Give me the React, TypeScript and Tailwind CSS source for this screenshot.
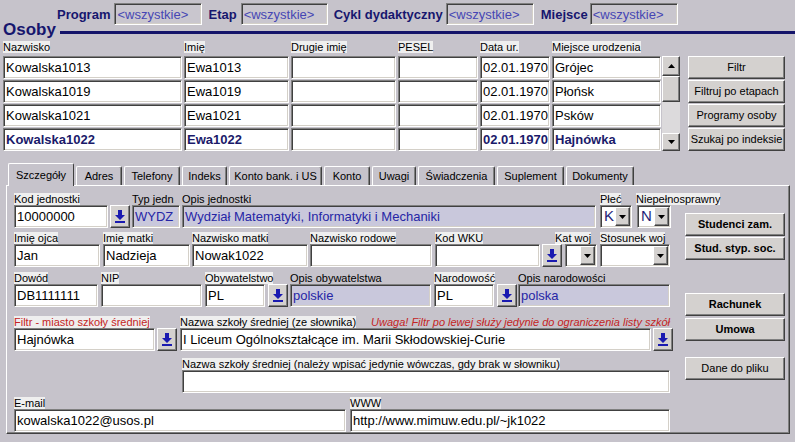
import React from "react";

const SUNKEN =
  "border border-t-[#808080] border-l-[#808080] border-b-white border-r-white shadow-[inset_1px_1px_0_#404040,inset_-1px_-1px_0_#d4d0c8]";
const RAISED =
  "border border-t-white border-l-white border-b-[#404040] border-r-[#404040] shadow-[inset_-1px_-1px_0_#808080]";

function Lbl({
  children,
  plain,
  red,
  className = "",
}: {
  children: React.ReactNode;
  plain?: boolean;
  red?: boolean;
  className?: string;
}) {
  return (
    <div className={"h-[12px] leading-[12px] text-[11px] whitespace-nowrap " + className}>
      <span className={(plain ? "" : "bg-[#efefef] ") + (red ? "text-[#c42424]" : "text-black")}>{children}</span>
    </div>
  );
}

function Field({
  children,
  className = "",
  ro,
  bold,
}: {
  children?: React.ReactNode;
  className?: string;
  ro?: boolean;
  bold?: boolean;
}) {
  return (
    <div
      className={
        "h-[23px] flex items-center px-[2px] text-[13px] whitespace-nowrap overflow-hidden shrink-0 " +
        (ro ? "bg-[#c9c8dc] text-[#2626a6] " : "bg-white ") +
        (bold ? "font-bold text-[#1a1a6a] " : ro ? "" : "text-black ") +
        SUNKEN +
        " " +
        className
      }
    >
      {children}
    </div>
  );
}

function ArrowBtn() {
  return (
    <div className={"w-[20px] h-[23px] shrink-0 bg-[#d4d1cf] flex items-center justify-center " + RAISED}>
      <svg width="10" height="13" viewBox="0 0 10 13">
        <path d="M3 0h4v5h3L5 10 0 5h3z" fill="#1a1ab0" />
        <rect x="0" y="11" width="10" height="2" fill="#1a1ab0" />
      </svg>
    </div>
  );
}

function Tri({ up }: { up?: boolean }) {
  return (
    <svg width="7" height="4" viewBox="0 0 7 4">
      <path d={up ? "M0 4h7L3.5 0z" : "M0 0h7L3.5 4z"} fill="black" />
    </svg>
  );
}

function Combo({ value, className = "" }: { value?: string; className?: string }) {
  return (
    <div className={"h-[23px] bg-white flex items-center shrink-0 p-[1px] " + SUNKEN + " " + className}>
      <span className="flex-1 pl-[2px] text-[15px] text-[#1e1e78]">{value}</span>
      <div className={"w-[15px] h-[19px] bg-[#d4d1cf] flex items-center justify-center " + RAISED}>
        <Tri />
      </div>
    </div>
  );
}

function Btn({ children, bold, className = "" }: { children: React.ReactNode; bold?: boolean; className?: string }) {
  return (
    <div
      className={
        "h-[23px] bg-[#d4d1cf] flex items-center justify-center text-[11px] text-black " +
        (bold ? "font-bold " : "") +
        RAISED +
        " " +
        className
      }
    >
      {children}
    </div>
  );
}

function HeadBox({ className = "" }: { className?: string }) {
  return (
    <div
      className={
        "h-[22px] mt-[3px] bg-[#c9c6ce] flex items-start pt-[1px] px-[2px] text-[13px] font-normal text-[#4646b4] " +
        SUNKEN +
        " " +
        className
      }
    >
      {"<wszystkie>"}
    </div>
  );
}

const rows = [
  { n: "Kowalska1013", i: "Ewa1013", m: "Grójec" },
  { n: "Kowalska1019", i: "Ewa1019", m: "Płońsk" },
  { n: "Kowalska1021", i: "Ewa1021", m: "Psków" },
  { n: "Kowalska1022", i: "Ewa1022", m: "Hajnówka", bold: true },
];

const tabs = [
  { t: "Szczegóły", w: "w-[66px]", active: true },
  { t: "Adres", w: "w-[46px]" },
  { t: "Telefony", w: "w-[56px]" },
  { t: "Indeks", w: "w-[45px]" },
  { t: "Konto bank. i US", w: "w-[93px]" },
  { t: "Konto", w: "w-[46px]" },
  { t: "Uwagi", w: "w-[44px]" },
  { t: "Świadczenia", w: "w-[77px]" },
  { t: "Suplement", w: "w-[67px]" },
  { t: "Dokumenty", w: "w-[68px]" },
];

export default function App() {
  return (
    <div
      className="w-[795px] h-[442px] bg-[#c6c3cb] overflow-hidden flex flex-col"
      style={{ fontFamily: '"Liberation Sans", Arial, Helvetica, sans-serif' }}
    >
      {/* header filter row */}
      <div className="h-[26px] flex items-start pl-[57px] text-[13px] font-bold text-[#16166e] shrink-0">
        <span className="mt-[5px]">Program</span>
        <HeadBox className="ml-[4px] w-[88px]" />
        <span className="mt-[5px] ml-[6px]">Etap</span>
        <HeadBox className="ml-[4px] w-[87px]" />
        <span className="mt-[5px] ml-[6px]">Cykl dydaktyczny</span>
        <HeadBox className="ml-[3px] w-[88px]" />
        <span className="mt-[5px] ml-[7px]">Miejsce</span>
        <HeadBox className="ml-[2px] w-[88px]" />
      </div>

      {/* Osoby */}
      <div className="-mt-[5px] h-[18px] flex items-start shrink-0">
        <span className="ml-[3px] text-[17px] leading-[18px] font-bold text-[#16166e]">Osoby</span>
        <div className="ml-[4px] mt-[10px] flex-1 h-[3px] bg-[#14146a]" />
      </div>

      {/* column labels */}
      <div className="mt-[2px] ml-[3px] flex gap-[2px] shrink-0">
        <Lbl className="w-[179px]">Nazwisko</Lbl>
        <Lbl className="w-[105px]">Imię</Lbl>
        <Lbl className="w-[105px]">Drugie imię</Lbl>
        <Lbl className="w-[80px]">PESEL</Lbl>
        <Lbl className="w-[70px]">Data ur.</Lbl>
        <Lbl className="w-[109px]">Miejsce urodzenia</Lbl>
      </div>

      {/* list + buttons */}
      <div className="mt-[3px] ml-[3px] flex shrink-0">
        <div className="flex flex-col gap-[1px]">
          {rows.map((r) => (
            <div key={r.n} className="flex gap-[2px]">
              <Field className="w-[179px]" bold={r.bold}>{r.n}</Field>
              <Field className="w-[105px]" bold={r.bold}>{r.i}</Field>
              <Field className="w-[105px]" />
              <Field className="w-[80px]" />
              <Field className="w-[70px] px-[1px]" bold={r.bold}>02.01.1970</Field>
              <Field className="w-[109px]" bold={r.bold}>{r.m}</Field>
            </div>
          ))}
        </div>
        <div className="ml-[1px] w-[18px] h-[95px] flex flex-col bg-[#dcdadc]">
          <div className={"h-[20px] bg-[#d4d1cf] flex items-center justify-center " + RAISED}>
            <Tri up />
          </div>
          <div className={"h-[26px] bg-[#d4d1cf] " + RAISED} />
          <div className="flex-1" />
          <div className={"h-[18px] bg-[#d4d1cf] flex items-center justify-center " + RAISED}>
            <Tri />
          </div>
        </div>
        <div className="ml-[8px] w-[97px] flex flex-col gap-[1px]">
          <Btn>Filtr</Btn>
          <Btn>Filtruj po etapach</Btn>
          <Btn>Programy osoby</Btn>
          <Btn>Szukaj po indeksie</Btn>
        </div>
      </div>

      {/* tabs */}
      <div className="mt-[12px] ml-[8px] h-[22px] flex items-end gap-[2px] shrink-0 relative z-10">
        {tabs.map((t) =>
          t.active ? (
            <div
              key={t.t}
              className={
                "h-[23px] -mb-[1px] bg-[#c6c3cb] border-t border-l border-r border-t-white border-l-white border-r-[#404040] rounded-t-[2px] flex items-center justify-center text-[11px] text-black " +
                t.w
              }
            >
              {t.t}
            </div>
          ) : (
            <div
              key={t.t}
              className={
                "h-[19px] bg-[#c6c3cb] border-t border-l border-r border-t-white border-l-white border-r-[#404040] shadow-[inset_-1px_0_0_#808080] rounded-t-[2px] flex items-center justify-center text-[11px] text-black " +
                t.w
              }
            >
              {t.t}
            </div>
          )
        )}
      </div>

      {/* panel */}
      <div className={"ml-[6px] w-[784px] h-[249px] flex shrink-0 " + RAISED}>
        <div className="w-[666px] pl-[7px] pt-[7px] flex flex-col">
          {/* row 1 */}
          <div className="flex">
            <div className="flex flex-col">
              <Lbl>Kod jednostki</Lbl>
              <div className="flex gap-[2px]">
                <Field className="w-[94px]">10000000</Field>
                <ArrowBtn />
              </div>
            </div>
            <div className="ml-[2px] flex flex-col">
              <Lbl plain>Typ jedn</Lbl>
              <Field ro className="w-[48px]">WYDZ</Field>
            </div>
            <div className="ml-[2px] flex flex-col">
              <Lbl plain>Opis jednostki</Lbl>
              <Field ro className="w-[414px]">Wydział Matematyki, Informatyki i Mechaniki</Field>
            </div>
            <div className="ml-[4px] flex flex-col w-[32px]">
              <Lbl>Płeć</Lbl>
              <Combo value="K" className="w-[32px]" />
            </div>
            <div className="ml-[4px] flex flex-col w-[33px]">
              <Lbl>Niepełnosprawny</Lbl>
              <Combo value="N" className="w-[34px] ml-[1px]" />
            </div>
          </div>

          {/* row 2 */}
          <div className="mt-[4px] flex">
            <div className="flex flex-col">
              <Lbl>Imię ojca</Lbl>
              <Field className="w-[86px]">Jan</Field>
            </div>
            <div className="ml-[3px] flex flex-col">
              <Lbl>Imię matki</Lbl>
              <Field className="w-[87px]">Nadzieja</Field>
            </div>
            <div className="ml-[2px] flex flex-col">
              <Lbl>Nazwisko matki</Lbl>
              <Field className="w-[116px]">Nowak1022</Field>
            </div>
            <div className="ml-[2px] flex flex-col">
              <Lbl>Nazwisko rodowe</Lbl>
              <Field className="w-[122px]" />
            </div>
            <div className="ml-[3px] flex flex-col">
              <Lbl>Kod WKU</Lbl>
              <div className="flex gap-[2px]">
                <Field className="w-[105px]" />
                <ArrowBtn />
              </div>
            </div>
            <div className="ml-[3px] flex flex-col w-[32px]">
              <Lbl className="-ml-[10px]">Kat woj</Lbl>
              <Combo className="w-[32px]" />
            </div>
            <div className="ml-[3px] flex flex-col">
              <Lbl>Stosunek woj</Lbl>
              <Combo className="w-[70px]" />
            </div>
          </div>

          {/* row 3 */}
          <div className="mt-[5px] flex">
            <div className="flex flex-col">
              <Lbl>Dowód</Lbl>
              <Field className="w-[84px]">DB1111111</Field>
            </div>
            <div className="ml-[3px] flex flex-col">
              <Lbl>NIP</Lbl>
              <Field className="w-[101px]" />
            </div>
            <div className="ml-[3px] flex flex-col">
              <Lbl>Obywatelstwo</Lbl>
              <div className="flex gap-[3px]">
                <Field className="w-[60px]">PL</Field>
                <ArrowBtn />
              </div>
            </div>
            <div className="ml-[2px] flex flex-col">
              <Lbl plain>Opis obywatelstwa</Lbl>
              <Field ro className="w-[141px]">polskie</Field>
            </div>
            <div className="ml-[3px] flex flex-col">
              <Lbl>Narodowość</Lbl>
              <div className="flex gap-[3px]">
                <Field className="w-[60px]">PL</Field>
                <ArrowBtn />
              </div>
            </div>
            <div className="ml-[1px] flex flex-col">
              <Lbl plain>Opis narodowości</Lbl>
              <Field ro className="w-[152px]">polska</Field>
            </div>
          </div>

          {/* row 4 */}
          <div className="mt-[9px] flex">
            <div className="flex flex-col">
              <Lbl red>Filtr - miasto szkoły średniej</Lbl>
              <div className="flex gap-[2px]">
                <Field className="w-[141px]">Hajnówka</Field>
                <ArrowBtn />
              </div>
            </div>
            <div className="ml-[3px] flex flex-col">
              <div className="flex">
                <Lbl>Nazwa szkoły średniej (ze słownika)</Lbl>
                <Lbl plain red className="ml-auto mr-[3px] italic">
                  Uwaga! Filtr po lewej służy jedynie do ograniczenia listy szkół
                </Lbl>
              </div>
              <div className="flex gap-[2px]">
                <Field className="w-[471px]">I Liceum Ogólnokształcące im. Marii Skłodowskiej-Curie</Field>
                <ArrowBtn />
              </div>
            </div>
          </div>

          {/* row 5 */}
          <div className="mt-[7px] ml-[168px] flex flex-col">
            <Lbl>Nazwa szkoły średniej (należy wpisać jedynie wówczas, gdy brak w słowniku)</Lbl>
            <Field className="w-[488px]" />
          </div>

          {/* row 6 */}
          <div className="mt-[4px] flex">
            <div className="flex flex-col">
              <Lbl>E-mail</Lbl>
              <Field className="w-[332px]">kowalska1022@usos.pl</Field>
            </div>
            <div className="ml-[4px] flex flex-col">
              <Lbl>WWW</Lbl>
              <Field className="w-[320px]">http://www.mimuw.edu.pl/~jk1022</Field>
            </div>
          </div>
        </div>

        <div className="ml-[12px] w-[100px] pt-[27px] flex flex-col">
          <Btn bold>Studenci zam.</Btn>
          <Btn bold className="mt-[1px]">Stud. styp. soc.</Btn>
          <Btn bold className="mt-[33px]">Rachunek</Btn>
          <Btn bold className="mt-[2px]">Umowa</Btn>
          <Btn className="mt-[16px]">Dane do pliku</Btn>
        </div>
      </div>
    </div>
  );
}
